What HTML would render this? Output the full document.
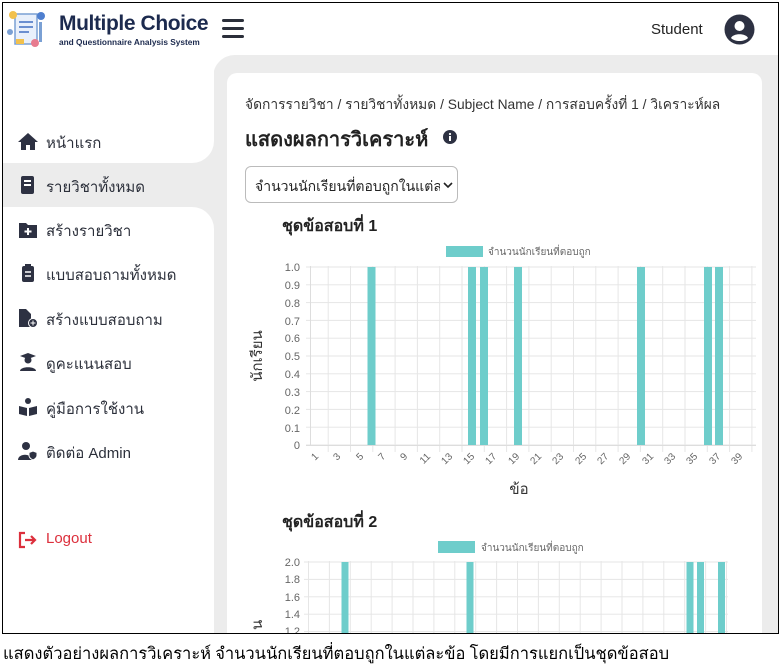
<!DOCTYPE html>
<html><head><meta charset="utf-8">
<style>
*{margin:0;padding:0;box-sizing:border-box}
body{width:781px;height:668px;background:#fff;position:relative;overflow:hidden;font-family:"Liberation Sans","Noto Sans CJK SC",sans-serif;color:#2b2f3a}
.a{position:absolute}
.frame{left:2px;top:2px;width:777px;height:632px;border:1px solid #000;overflow:hidden}
.nav{font-size:15px;color:#2b2f3a;left:46px}
.ic{left:18px;width:20px;height:18px}
</style></head><body>
<div class="a frame">
 <div class="a" style="left:210px;top:52px;width:570px;height:600px;background:#ececec;border-top-left-radius:22px"></div>
 <div class="a" style="left:0;top:140px;width:215px;height:90px;background:#ececec"></div>
 <div class="a" style="left:0;top:52px;width:211px;height:108px;background:#fff;border-bottom-right-radius:22px"></div>
 <div class="a" style="left:0;top:204px;width:211px;height:440px;background:#fff;border-top-right-radius:22px"></div>
 <div class="a" style="left:3px;top:160px;width:212px;height:44px;background:#ececec;border-radius:22px 0 0 22px"></div>
 <div class="a" style="left:224px;top:70px;width:535px;height:600px;background:#fff;border-radius:10px"></div>
</div>
<svg class="a" style="left:6px;top:8px" width="44" height="42" viewBox="0 0 44 42">
 <rect x="9" y="6" width="22" height="30" fill="#e9f0fb" stroke="#7aa0d4" stroke-width="1.5"/>
 <rect x="13" y="13" width="14" height="2" fill="#6b8fd0"/><rect x="13" y="18" width="14" height="2" fill="#6b8fd0"/><rect x="13" y="23" width="10" height="2" fill="#6b8fd0"/>
 <circle cx="7" cy="7" r="4" fill="#f2c14e"/><circle cx="35" cy="8" r="4" fill="#4f7fcf"/>
 <rect x="33" y="14" width="3" height="20" fill="#7aa0d4"/><circle cx="29" cy="35" r="4" fill="#e77b8f"/>
 <rect x="10" y="31" width="8" height="5" fill="#f2c14e"/><circle cx="4" cy="24" r="3" fill="#7aa0d4"/>
</svg>
<div class="a" style="left:59px;top:12px;font-size:21px;font-weight:bold;color:#1c2a4e;letter-spacing:-0.4px">Multiple Choice</div>
<div class="a" style="left:59px;top:37px;font-size:8.3px;color:#1c2a4e;font-weight:bold">and Questionnaire Analysis System</div>
<div class="a" style="left:222px;top:19px;width:22px;height:3px;background:#2b2f3a;box-shadow:0 8px 0 #2b2f3a,0 16px 0 #2b2f3a;border-radius:2px"></div>
<div class="a" style="left:651px;top:21px;font-size:15px;color:#222">Student</div>
<svg class="a" style="left:724px;top:14px" width="31" height="31" viewBox="0 0 31 31"><circle cx="15.5" cy="15.5" r="15" fill="#2d3142"/><circle cx="15.5" cy="12" r="5" fill="#fff"/><path d="M7 24c2-5 15-5 17 0c-4 4-13 4-17 0z" fill="#fff"/></svg>
<svg class="a ic" style="top:132px" viewBox="0 0 20 18"><path d="M10 1L0 10h3v8h5v-5h4v5h5v-8h3z" fill="#2d3142"/></svg>
<div class="a nav" style="top:131px">หน้าแรก</div>
<svg class="a ic" style="top:176px" viewBox="0 0 20 18"><rect x="3" y="0" width="13" height="18" rx="2" fill="#2d3142"/><rect x="6" y="4" width="7" height="2" fill="#fff"/><rect x="6" y="8" width="7" height="2" fill="#fff"/></svg>
<div class="a nav" style="top:175px">รายวิชาทั้งหมด</div>
<svg class="a ic" style="top:221px" viewBox="0 0 20 18"><path d="M1 2h7l2 2h9v13H1z" fill="#2d3142"/><path d="M10 7v7M6.5 10.5h7" stroke="#fff" stroke-width="2"/></svg>
<div class="a nav" style="top:219px">สร้างรายวิชา</div>
<svg class="a ic" style="top:264px" viewBox="0 0 20 18"><rect x="4" y="2" width="12" height="16" rx="2" fill="#2d3142"/><rect x="7" y="0" width="6" height="4" fill="#2d3142"/><path d="M7 8h6M7 12h6" stroke="#fff" stroke-width="1.5"/></svg>
<div class="a nav" style="top:263px">แบบสอบถามทั้งหมด</div>
<svg class="a ic" style="top:309px" viewBox="0 0 20 18"><path d="M1 0h7l5 5v13H1z" fill="#2d3142"/><circle cx="15" cy="14" r="4.5" fill="#2d3142" stroke="#fff"/><path d="M15 11.5v5M12.5 14h5" stroke="#fff"/></svg>
<div class="a nav" style="top:308px">สร้างแบบสอบถาม</div>
<svg class="a ic" style="top:353px" viewBox="0 0 20 18"><path d="M2 3l8-3 8 3-8 3z" fill="#2d3142"/><circle cx="10" cy="7" r="3.5" fill="#2d3142"/><path d="M2 18c0-5 16-5 16 0z" fill="#2d3142"/></svg>
<div class="a nav" style="top:352px">ดูคะแนนสอบ</div>
<svg class="a ic" style="top:398px" viewBox="0 0 20 18"><circle cx="10" cy="3" r="3" fill="#2d3142"/><path d="M1 8l8 2v8l-8-2zM19 8l-8 2v8l8-2z" fill="#2d3142"/></svg>
<div class="a nav" style="top:397px">คู่มือการใช้งาน</div>
<svg class="a ic" style="top:442px" viewBox="0 0 20 18"><circle cx="8" cy="4" r="4" fill="#2d3142"/><path d="M0 18c0-7 14-7 14 0z" fill="#2d3142"/><path d="M15 9l4 1.5v3c0 2-2 3.5-4 4.5c-2-1-4-2.5-4-4.5v-3z" fill="#2d3142" stroke="#fff"/></svg>
<div class="a nav" style="top:441px">ติดต่อ Admin</div>
<svg class="a ic" style="top:531px" viewBox="0 0 20 18"><path d="M7 2H2v14h5" stroke="#dc2f3c" stroke-width="2.2" fill="none"/><path d="M7 9h10M13 5l4 4-4 4" stroke="#dc2f3c" stroke-width="2.2" fill="none"/></svg>
<div class="a nav" style="top:530px;color:#dc2f3c">Logout</div>
<div class="a" style="left:245px;top:94px;font-size:13.8px;color:#333">จัดการรายวิชา / รายวิชาทั้งหมด / Subject Name / การสอบครั้งที่ 1 / วิเคราะห์ผล</div>
<div class="a" style="left:245px;top:123px;font-size:20px;font-weight:bold;color:#222">แสดงผลการวิเคราะห์</div>
<svg class="a" style="left:443px;top:130px" width="14" height="14" viewBox="0 0 14 14"><circle cx="7" cy="7" r="7" fill="#2d3142"/><rect x="6" y="6" width="2" height="5" fill="#fff"/><circle cx="7" cy="4" r="1.1" fill="#fff"/></svg>
<div class="a" style="left:245px;top:166px;width:213px;height:37px;border:1px solid #bbb;border-radius:6px;font-size:14px;padding:9px 0 0 9px;color:#222">จำนวนนักเรียนที่ตอบถูกในแต่ล</div>
<div class="a" style="left:440px;top:170px;width:16px;height:28px;background:#fff"></div>
<svg class="a" style="left:443px;top:181px" width="10" height="8" viewBox="0 0 10 8"><path d="M1 2l4 4 4-4" stroke="#222" stroke-width="1.6" fill="none"/></svg>
<div class="a" style="left:282px;top:214px;font-size:16px;font-weight:bold;color:#222">ชุดข้อสอบที่ 1</div>
<div class="a" style="left:282px;top:510px;font-size:16px;font-weight:bold;color:#222">ชุดข้อสอบที่ 2</div>
<svg class="a" style="left:0;top:0" width="781" height="633" viewBox="0 0 781 633" font-family="Liberation Sans, Noto Sans CJK SC, sans-serif">
 <defs>
  <pattern id="v1" x="327.7" y="0" width="22.3" height="10" patternUnits="userSpaceOnUse"><rect x="0" y="0" width="1" height="10" fill="#e6e6e6"/></pattern>
  <pattern id="h1" x="0" y="266.5" width="10" height="17.8" patternUnits="userSpaceOnUse"><rect x="0" y="0" width="10" height="1" fill="#e6e6e6"/></pattern>
  <pattern id="v2" x="308" y="0" width="20.9" height="10" patternUnits="userSpaceOnUse"><rect x="0" y="0" width="1" height="10" fill="#e6e6e6"/></pattern>
  <pattern id="h2" x="0" y="561.5" width="10" height="17.4" patternUnits="userSpaceOnUse"><rect x="0" y="0" width="10" height="1" fill="#e6e6e6"/></pattern>
 </defs>
 <rect x="306" y="266" width="450" height="180" fill="url(#h1)"/>
 <rect x="311" y="266" width="445" height="186" fill="url(#v1)"/>
 <rect x="310" y="266" width="1" height="180" fill="#ddd"/>
 <rect x="306" y="445" width="450" height="1" fill="#ddd"/>
 <rect x="446" y="246" width="37" height="11" fill="#6ecdcb"/>
 <text x="488" y="255" font-size="10" fill="#666">จำนวนนักเรียนที่ตอบถูก</text>
 <g fill="#6ecdcb">
  <rect x="367.5" y="267" width="8" height="178"/><rect x="468" y="267" width="8" height="178"/><rect x="480" y="267" width="8" height="178"/><rect x="514" y="267" width="8" height="178"/><rect x="637" y="267" width="8" height="178"/><rect x="704" y="267" width="8" height="178"/><rect x="715" y="267" width="8" height="178"/>
 </g>
 <g font-size="11" fill="#666" text-anchor="end">
  <text x="300" y="271">1.0</text><text x="300" y="289">0.9</text><text x="300" y="307">0.8</text><text x="300" y="325">0.7</text><text x="300" y="342">0.6</text><text x="300" y="360">0.5</text><text x="300" y="378">0.4</text><text x="300" y="396">0.3</text><text x="300" y="414">0.2</text><text x="300" y="432">0.1</text><text x="300" y="449">0</text>
 </g>
 <g font-size="10" fill="#666" text-anchor="end">
  <text transform="translate(319,457) rotate(-45)">1</text><text transform="translate(341,457) rotate(-45)">3</text><text transform="translate(364,457) rotate(-45)">5</text><text transform="translate(386,457) rotate(-45)">7</text><text transform="translate(408,457) rotate(-45)">9</text><text transform="translate(431,457) rotate(-45)">11</text><text transform="translate(453,457) rotate(-45)">13</text><text transform="translate(475,457) rotate(-45)">15</text><text transform="translate(497,457) rotate(-45)">17</text><text transform="translate(520,457) rotate(-45)">19</text><text transform="translate(542,457) rotate(-45)">21</text><text transform="translate(564,457) rotate(-45)">23</text><text transform="translate(587,457) rotate(-45)">25</text><text transform="translate(609,457) rotate(-45)">27</text><text transform="translate(631,457) rotate(-45)">29</text><text transform="translate(654,457) rotate(-45)">31</text><text transform="translate(676,457) rotate(-45)">33</text><text transform="translate(698,457) rotate(-45)">35</text><text transform="translate(721,457) rotate(-45)">37</text><text transform="translate(743,457) rotate(-45)">39</text>
 </g>
 <text x="519" y="494" font-size="15" fill="#333" text-anchor="middle">ข้อ</text>
 <text transform="translate(262,356) rotate(-90)" font-size="15" fill="#333" text-anchor="middle">นักเรียน</text>
 <rect x="304" y="561" width="424" height="80" fill="url(#h2)"/>
 <rect x="308" y="561" width="420" height="80" fill="url(#v2)"/>
 <rect x="438" y="541" width="37" height="12" fill="#6ecdcb"/>
 <text x="481" y="551" font-size="10" fill="#666">จำนวนนักเรียนที่ตอบถูก</text>
 <g fill="#6ecdcb">
  <rect x="341.5" y="562" width="7" height="80"/><rect x="466.5" y="562" width="7" height="80"/><rect x="686.5" y="562" width="7" height="80"/><rect x="697" y="562" width="7" height="80"/><rect x="718" y="562" width="7" height="80"/>
 </g>
 <g font-size="11" fill="#666" text-anchor="end">
  <text x="300" y="566">2.0</text><text x="300" y="583">1.8</text><text x="300" y="601">1.6</text><text x="300" y="618">1.4</text><text x="300" y="635">1.2</text>
 </g>
 <text transform="translate(262,630) rotate(-90)" font-size="15" fill="#333">น</text>
</svg>
<div class="a" style="left:0;top:633px;width:781px;height:35px;background:#fff"></div>
<div class="a" style="left:2px;top:633px;width:777px;height:1px;background:#000"></div>
<div class="a" style="left:3px;top:641px;font-size:16.5px;font-family:'Liberation Serif','Noto Serif CJK SC',serif;color:#000">แสดงตัวอย่างผลการวิเคราะห์ จำนวนนักเรียนที่ตอบถูกในแต่ละข้อ โดยมีการแยกเป็นชุดข้อสอบ</div>
</body></html>
